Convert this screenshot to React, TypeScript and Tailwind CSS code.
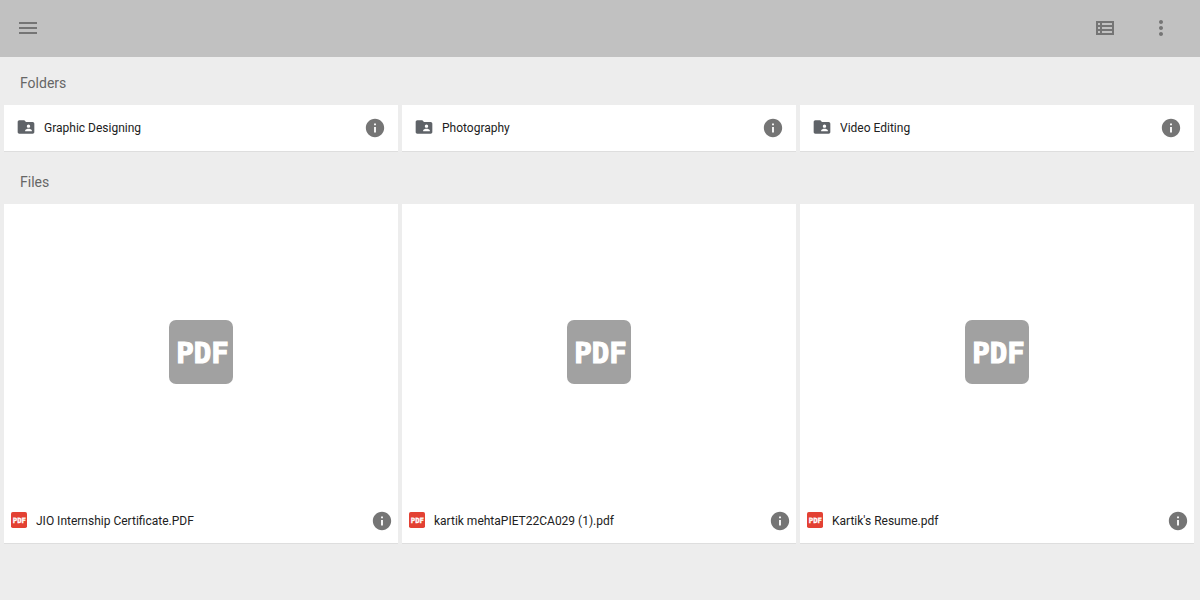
import React from 'react';

interface DriveItem {
  id: string;
  name: string;
}

const folders: DriveItem[] = [
  { id: 'graphic', name: 'Graphic Designing' },
  { id: 'photo', name: 'Photography' },
  { id: 'video', name: 'Video Editing' },
];

const files: DriveItem[] = [
  { id: 'jio', name: 'JIO Internship Certificate.PDF' },
  { id: 'piet', name: 'kartik mehtaPIET22CA029 (1).pdf' },
  { id: 'resume', name: "Kartik's Resume.pdf" },
];

interface IconProps {
  d: string;
  className: string;
}

const Icon: React.FC<IconProps> = ({ d, className }) => (
  <svg viewBox="0 0 24 24" fill="currentColor" aria-hidden="true" className={className}>
    <path d={d} />
  </svg>
);

const paths = {
  menu: 'M3 18h18v-2H3v2zm0-5h18v-2H3v2zm0-7v2h18V6H3z',
  list: 'M3 5v14h18V5H3zm4 2v2H5V7h2zm-2 6v-2h2v2H5zm0 2h2v2H5v-2zm14 2H9v-2h10v2zm0-4H9v-2h10v2zm0-4H9V7h10v2z',
  more: 'M12 8c1.1 0 2-.9 2-2s-.9-2-2-2-2 .9-2 2 .9 2 2 2zm0 2c-1.1 0-2 .9-2 2s.9 2 2 2 2-.9 2-2-.9-2-2-2zm0 6c-1.1 0-2 .9-2 2s.9 2 2 2 2-.9 2-2-.9-2-2-2z',
  folder: 'M20 6h-8l-2-2H4c-1.1 0-1.99.9-1.99 2L2 18c0 1.1.9 2 2 2h16c1.1 0 2-.9 2-2V8c0-1.1-.9-2-2-2zm-5 3c1.1 0 2 .9 2 2s-.9 2-2 2-2-.9-2-2 .9-2 2-2zm4 8h-8v-1c0-1.33 2.67-2 4-2s4 .67 4 2v1z',
  info: 'M12 2C6.48 2 2 6.48 2 12s4.48 10 10 10 10-4.48 10-10S17.52 2 12 2zm1 15h-2v-6h2v6zm0-8h-2V7h2v2z',
};

const PdfIcon: React.FC<{ className: string }> = ({ className }) => (
  <svg viewBox="0 0 64 64" aria-hidden="true" className={className}>
    <rect width="64" height="64" rx="7" fill="currentColor" />
    <text
      x="33.5"
      y="42.5"
      textAnchor="middle"
      fill="#fff"
      stroke="#fff"
      strokeWidth="1.2"
      fontSize="29"
      fontWeight="700"
      fontFamily="DejaVu Sans Mono, monospace"
    >
      PDF
    </text>
  </svg>
);

const InfoButton: React.FC<{ name: string }> = ({ name }) => (
  <button type="button" aria-label={`Details for ${name}`} className="shrink-0 text-[#757575]">
    <Icon d={paths.info} className="size-[22px]" />
  </button>
);

const SectionTitle: React.FC<{ children: React.ReactNode }> = ({ children }) => (
  <h2 className="px-4 pt-4 pb-3 text-sm leading-5 text-[#666]">{children}</h2>
);

export default function App() {
  return (
    <div className="min-h-screen bg-[#ededed] font-[Roboto,sans-serif] text-[#212121]">
      <header className="flex h-[57px] items-center justify-between bg-[#c1c1c1] px-4 pb-px text-[#757575]">
        <button type="button" aria-label="Menu">
          <Icon d={paths.menu} className="size-6" />
        </button>
        <div className="flex items-center gap-8 pr-[11px]">
          <button type="button" aria-label="List view">
            <Icon d={paths.list} className="size-6" />
          </button>
          <button type="button" aria-label="More actions">
            <Icon d={paths.more} className="size-6" />
          </button>
        </div>
      </header>

      <main className="pr-[6px] pl-1">
        <section className="pb-1">
          <SectionTitle>Folders</SectionTitle>
          <ul className="grid grid-cols-3 gap-1">
            {folders.map((folder) => (
              <li
                key={folder.id}
                className="flex h-[47px] items-center border-b border-[#dedede] bg-white px-3"
              >
                <Icon d={paths.folder} className="mr-2 mb-0.5 size-5 shrink-0 text-[#5f6368]" />
                <span className="flex-1 truncate text-xs">{folder.name}</span>
                <InfoButton name={folder.name} />
              </li>
            ))}
          </ul>
        </section>

        <section>
          <SectionTitle>Files</SectionTitle>
          <ul className="grid grid-cols-3 gap-1">
            {files.map((file) => (
              <li key={file.id} className="border-b border-[#dedede] bg-white">
                <div className="flex h-74 items-center justify-center">
                  <PdfIcon className="size-16 text-[#a1a1a1]" />
                </div>
                <div className="flex h-[43px] items-center pr-[5px] pb-px pl-[7px]">
                  <PdfIcon className="mr-[9px] mb-0.5 size-4 shrink-0 text-[#e34133]" />
                  <span className="flex-1 truncate text-xs">{file.name}</span>
                  <InfoButton name={file.name} />
                </div>
              </li>
            ))}
          </ul>
        </section>
      </main>
    </div>
  );
}
